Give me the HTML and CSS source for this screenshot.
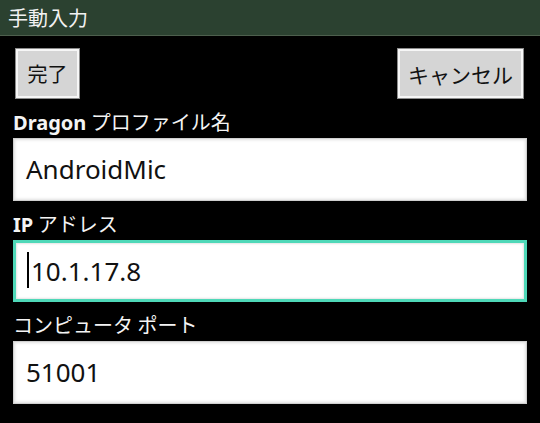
FILE: index.html
```html
<!DOCTYPE html>
<html>
<head>
<meta charset="utf-8">
<link rel="stylesheet" href="styles.css">
</head>
<body>
<div class="titlebar">手動入力</div>
<div class="content">
  <div class="buttons">
    <div class="btn btn-done">完了</div>
    <div class="btn btn-cancel">キャンセル</div>
  </div>
  <div class="label"><span class="latin">Dragon</span> プロファイル名</div>
  <div class="field">AndroidMic</div>
  <div class="label"><span class="latin">IP</span> アドレス</div>
  <div class="field focused"><span class="cursor"></span>10.1.17.8</div>
  <div class="label">コンピュータ ポート</div>
  <div class="field">51001</div>
</div>
</body>
</html>
```

FILE: styles.css
```css
html, body {
  margin: 0;
  padding: 0;
  background: #000;
}
body {
  width: 540px;
  height: 423px;
  overflow: hidden;
  font-family: "Noto Sans", "Noto Sans CJK JP", sans-serif;
}
.titlebar {
  height: 35px;
  border-bottom: 1px solid #4d5f4d;
  background: #2b4130;
  color: #f2f2f2;
  font-family: "Noto Sans CJK JP", sans-serif;
  font-size: 20px;
  line-height: 35px;
  padding-left: 8px;
}
.content {
  padding: 0 13px;
}
.buttons {
  display: flex;
  justify-content: space-between;
  margin-top: 12px;
  padding: 0 3px 0 2px;
}
.btn {
  box-sizing: border-box;
  height: 51px;
  border: 1px solid #8c8c8c;
  box-shadow: inset 0 0 0 2px #f6f6f6;
  background: #d5d5d5;
  color: #111;
  font-family: "Noto Sans CJK JP", sans-serif;
  font-size: 20px;
  display: flex;
  align-items: center;
  justify-content: center;
}
.btn-done {
  width: 65px;
}
.btn-cancel {
  width: 127px;
  font-size: 21px;
}
.label {
  height: 24px;
  line-height: 24px;
  padding-top: 11px;
  margin-bottom: 4px;
  color: #f4f4f4;
  font-size: 20px;
  font-family: "Noto Sans CJK JP", sans-serif;
  white-space: nowrap;
}
.label:first-of-type {
  padding-top: 10px;
}
.latin {
  font-family: "Noto Sans", sans-serif;
  font-weight: bold;
}
.field {
  box-sizing: border-box;
  height: 63px;
  background: #fff;
  box-shadow: inset 0 0 0 1px #d0d0d0, inset 0 0 3px 2px #e0e0e0;
  color: #111;
  font-size: 26px;
  line-height: 63px;
  padding-left: 13px;
  white-space: nowrap;
}
.field.focused {
  height: 62px;
  border: 3px solid #4fd8b8;
  box-shadow: inset 0 0 2px 1px #e4e4e4;
  line-height: 57px;
  padding-left: 11px;
}
.cursor {
  display: inline-block;
  width: 2px;
  height: 36px;
  background: #000;
  vertical-align: -7px;
  margin-right: 2px;
}
```
